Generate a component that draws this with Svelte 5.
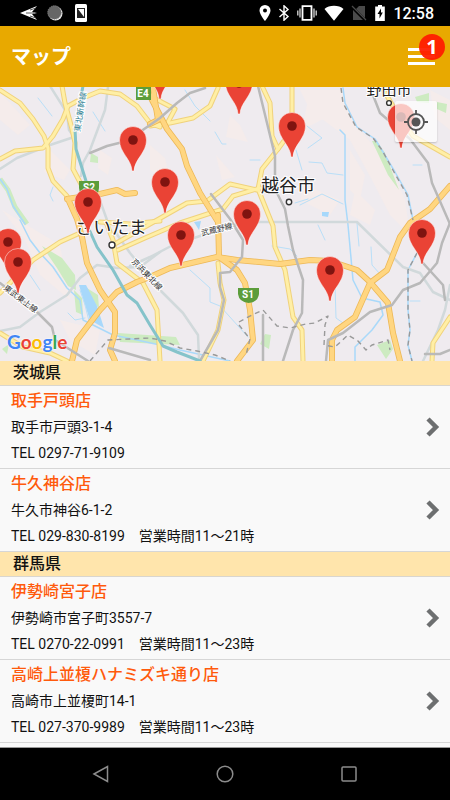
<script>
  const sections = [
    {
      prefecture: '茨城県',
      shops: [
        { name: '取手戸頭店', address: '取手市戸頭3-1-4', info: 'TEL 0297-71-9109' },
        { name: '牛久神谷店', address: '牛久市神谷6-1-2', info: 'TEL 029-830-8199　営業時間11〜21時' }
      ]
    },
    {
      prefecture: '群馬県',
      shops: [
        { name: '伊勢崎宮子店', address: '伊勢崎市宮子町3557-7', info: 'TEL 0270-22-0991　営業時間11〜23時' },
        { name: '高崎上並榎ハナミズキ通り店', address: '高崎市上並榎町14-1', info: 'TEL 027-370-9989　営業時間11〜23時' }
      ]
    }
  ];

  const pins = [
    [160, 68], [239, 83], [133, 140], [292, 126], [165, 182], [88, 202], [247, 214],
    [181, 235], [422, 233], [330, 270], [8, 242], [18, 262], [401, 117]
  ];

  const water = [
    'M0 179L7 189L13 206L25 224', 'M20 220L30 240L40 253L53 267L67 288L80 300L83 320L113 335L137 340L160 345L180 350L230 361',
    'M340 130L345 135L345 200L348 225L353 280L362 298L380 302L383 315L372 330L355 347L355 361',
    'M343 88L345 103L357 127L375 139L383 152L395 172L408 195L413 220', 'M417 253L408 270V310L410 330L408 345L412 361'
  ];

  const streams = [
    'M38 98L52 116', 'M93 112L105 131', 'M53 187L50 195L53 201', 'M185 90L195 106L210 121', 'M215 132L222 144L226 144',
    'M250 160H260', 'M296 150L302 170', 'M307 126L322 138L308 148', 'M309 162L322 163L327 173L343 175',
    'M300 205L322 194L343 204', 'M413 165H422', 'M190 270L210 288L210 302L220 306L248 337', 'M318 225L325 240', 'M357 223L359 246',
    'M371 247L372 265L380 274', 'M335 285L336 318L343 323', 'M410 301H420',
    'M272 246L290 249L297 256', 'M30 275L40 290', 'M68 313L75 320L85 318', 'M80 290L85 305L90 325', 'M295 203L308 199'
  ];

  const paleRails = [
    'M50 86L67 113L69 130L74 137L50 145L17 158L0 169', 'M108 87L105 110L90 150L83 163L81 176',
    'M160 252L140 267L117 268L97 265L80 278L67 295L40 312L20 327L0 331', 'M98 195L107 220',
    'M130 266L150 257L173 245L233 225L255 222L357 222L403 267L420 273L433 292L450 300',
    'M116 233L130 253L160 290L183 313L198 335L199 358', 'M450 285L445 310L438 330L423 361'
  ];

  const yellowRoads = [
    'M0 90L20 103L33 119L44 136L48 148L48 168L53 181L67 196',
    'M0 159L15 151L43 148L53 136L63 119L68 106L83 98L100 91L120 94L137 106L150 123L160 127',
    'M62 86L65 103L72 129L75 143L73 169L82 186', 'M218 88L210 106L193 118L170 123L150 126',
    'M150 96L175 109L168 122', 'M262 86L270 103L272 136L278 149L262 169L258 189L273 226L275 247L285 270L293 317L302 330L303 361',
    'M292 86V130L278 149', 'M113 245L150 224L187 203L207 201L230 184L257 190',
    'M118 250L145 238L180 223L223 209L233 196L260 188', 'M100 222L130 224L160 221', 'M106 222L113 240L117 263L143 283L157 310L160 361',
    'M0 293L33 260L60 242L80 233', 'M0 333L23 347L50 353L67 361',
    'M218 263L220 283L224 300L218 330L203 361', 'M380 84L397 113L413 136L450 157', 'M450 317L433 343L432 361'
  ];

  const orangeRoads = [
    'M67 199L100 194L117 190L125 194L135 193', 'M68 199L77 219L82 237L87 263L100 290L115 312L115 333L110 350L115 361',
    'M72 361L77 340L100 310L117 292L137 282L150 277L170 268L217 257L237 260L280 264L310 260L330 261L357 270L370 282L388 303L393 333L400 361',
    'M146 86L152 100L167 129L182 149L187 166L200 193L218 222', 'M218 215L219 257L237 270L245 283L250 310L253 340L237 361',
    'M332 361L332 340L337 330L355 317L370 283L387 270L400 237L410 223L430 209L450 186', 'M153 88L158 120L150 124'
  ];

  const rails = [
    'M90 153L107 146L127 141L160 118L177 103L190 93L205 88',
    'M258 86L267 123L275 156L275 189L285 209L288 226L293 250L303 280L302 313L293 330L283 361',
    'M211 194L230 219L243 240L242 257L230 272L220 273L220 287L224 300L218 330L200 361', 'M263 315V361',
    'M371 90L380 113L410 139L428 163L432 183L450 224', 'M450 223L442 243L437 263L420 283L403 290L392 305L370 312L343 333L328 340L326 361',
    'M423 263L443 285L445 300', 'M0 283L37 312L52 327L55 340L88 361', 'M109 348L150 360', 'M425 354L440 354L450 350'
  ];

  const borders = [
    'M341 88L343 103L356 127L373 138L382 150L394 172L407 195L413 220', 'M417 253L408 270V310L410 330L408 345L412 361',
    'M90 361L108 340L150 338L165 341L180 348L197 351L215 355L230 361', 'M239 322L252 315L263 310L277 326L290 328L306 324L315 323L328 316L325 325L324 345L335 347L348 335L358 341L366 350L372 345L388 340L390 350',
    'M239 325L250 339L246 355'
  ];
</script>

<div class="phone">
  <div class="status">
    <div class="group">
      <svg width="18" height="16" viewBox="0 0 18 16"><path d="M0 8L17 1L12 7L17 8L12 9L17 15Z" fill="#fff" /><path d="M6 8H14M10 5L16 3M10 11L16 13" stroke="#333" stroke-width=".8" /></svg>
      <svg width="16" height="16" viewBox="0 0 16 16"><circle cx="8.500" cy="8.500" r="7" fill="#eee" /><circle cx="7.500" cy="7.500" r="6.800" fill="#666" stroke="#888" stroke-dasharray="1 1" /></svg>
      <svg class="doc" width="12" height="18" viewBox="0 0 12 18"><rect width="12" height="18" rx="1.500" fill="#fff" /><path d="M2 4H10V14H2Z" fill="#222" /><path d="M3 5V13H9Z" fill="#222" /><path d="M3 5L9 13V5Z" fill="#fff" /></svg>
    </div>
    <div class="group right">
      <svg width="12" height="16" viewBox="0 0 12 16"><path d="M6 0A5.500 5.500 0 0 0 .5 5.500C.5 9.500 6 16 6 16S11.500 9.500 11.500 5.500A5.500 5.500 0 0 0 6 0Z" fill="#fff" /><circle cx="6" cy="5.500" r="2" /></svg>
      <svg width="12" height="16" viewBox="0 0 12 16"><path d="M1.500 4L10 11.500L6 15.200V.8L10 4.500L1.500 12" fill="none" stroke="#fff" stroke-width="1.400" /></svg>
      <svg width="20" height="16" viewBox="0 0 20 16"><path d="M5.500 1.200H14.500V14.800H5.500Z" fill="none" stroke="#fff" stroke-width="1.800" /><path d="M3 3.500V12.500M17 3.500V12.500M.8 5.500V10.500M19.200 5.500V10.500" stroke="#ddd" stroke-width="1.300" /></svg>
      <svg width="20" height="16" viewBox="0 0 20 16"><path d="M10 15.800L.5 4C5 -.2 15 -.2 19.500 4Z" fill="#fff" /></svg>
      <svg width="16" height="16" viewBox="0 0 16 16"><path d="M14 1V13L5 4L8 1ZM2 5L12 15H2Z" fill="#4a4a4a" /><path d="M1 1L15 15" stroke="#4a4a4a" stroke-width="1.300" /></svg>
      <svg width="12" height="16" viewBox="0 0 12 16"><path d="M4 0H8V1.500H10.800V16H1.200V1.500H4Z" fill="#fff" /><path d="M7 3.500L3.500 9H5.500V13.500L8.800 7.500H7Z" fill="#000" /></svg>
      <span class="clock">12:58</span>
    </div>
  </div>

  <header>
    <h1>マップ</h1>
    <button class="menu" aria-label="メニュー">
      <i></i><i></i><i></i>
      <span class="badge">1</span>
    </button>
  </header>

  <div class="map">
    <svg class="canvas" viewBox="0 87 450 274" preserveAspectRatio="xMidYMid slice" role="img" aria-label="店舗の地図">
      <rect x="-400" y="87" width="1300" height="274" fill="#efebef" />
      <g fill="#f5eceb">
        <path d="M0 92L30 125L18 135L0 120ZM50 150L70 170L64 180L44 172ZM100 150L112 158L108 175L98 168ZM150 145L165 158L170 180L150 170ZM230 115L240 125L248 142L226 137ZM216 155L235 177L222 180ZM2 210L60 245L70 300L40 275L25 240ZM60 320L100 330L95 355L70 340Z" />
        <path d="M300 90L340 90L360 130L390 165L405 200L410 235L390 215L372 180L350 140L310 110ZM305 185L340 200L330 215L300 200ZM350 150L365 175L360 200L350 190ZM430 90L450 100V130L435 118ZM310 90L330 100L325 118L302 130ZM355 190L375 210L370 225L350 215Z" />
      </g>
      <g fill="#cdebc1">
        <path d="M91 153L98 157L98 163L90 162ZM42 246L62 258L75 275L76 290L68 286L57 268ZM74 290L82 298L83 315L76 312ZM82 285L98 295L99 308L90 300Z" />
        <path d="M118 333L176 337L180 345L120 342ZM415 97L429 93V103L417 102ZM437 102L447 104L446 113L437 109ZM372 141L377 141L385 153L399 190L388 175ZM265 334L271 335L269 349L260 344ZM377 345L390 340L393 349L386 359ZM2 349L9 344L7 354Z" />
      </g>
      <path d="M79 285L86 285L97 306L104 328L90 320L84 302ZM322 212L329 212L328 217L322 216ZM194 222L201 221L199 230Z" fill="#a7d8fb" />
      <path d="M0 179L8 190L15 207L27 224" fill="none" stroke="#cdebc1" stroke-width="5" />
      <g class="lines">
        {#each streams as d}<path {d} stroke="#b9dff8" stroke-width="1" />{/each}
        {#each water as d}<path {d} stroke="#a9d9fa" stroke-width="1.500" />{/each}
        {#each paleRails as d}<path {d} stroke="#d1d9db" stroke-width="2.500" />{/each}
        {#each yellowRoads as d}<path {d} stroke="#f0d27c" stroke-width="5" />{/each}
        {#each yellowRoads as d}<path {d} stroke="#ffefa6" stroke-width="3" />{/each}
        {#each orangeRoads as d}<path {d} stroke="#edb857" stroke-width="6" />{/each}
        {#each orangeRoads as d}<path {d} stroke="#ffd681" stroke-width="4.400" />{/each}
        {#each rails as d}<path {d} stroke="#b9b9b9" stroke-width="2.500" />{/each}
        <path d="M83 86L75 129L76 149L86 181L88 227L97 247L113 270L127 295L137 303L150 325L163 346L177 352L200 361" stroke="#85c3ca" stroke-width="3" />
        {#each borders as d}<path {d} stroke="#999" stroke-width="1.400" stroke-dasharray="5 4" stroke-linecap="butt" />{/each}
      </g>
      <g class="shield">
        <path d="M136 87H151V100H136ZM79 181H99V188Q99 196 89 197Q79 196 79 188ZM238 288H259V294Q258 302 248.500 303Q239 302 238 294Z" fill="#5c9d3b" />
        <text x="143" y="97">E4</text>
        <text x="89" y="191">S2</text>
        <text x="248" y="298">S1</text>
      </g>
      <g class="city">
        <text x="111" y="234">さいたま</text>
        <text x="288" y="192">越谷市</text>
        <text class="small" x="389" y="95">野田市</text>
      </g>
      <g fill="#fff" stroke="#333" stroke-width="1.400">
        <circle cx="112" cy="245" r="3" /><circle cx="289" cy="202" r="2.700" /><circle cx="389" cy="103" r="2.400" />
      </g>
      <g class="rail">
        <text transform="translate(3 289) rotate(37)">東武東上線</text>
        <text transform="translate(131 262) rotate(46)">京浜東北線</text>
        <text transform="translate(202 236) rotate(-14)">武蔵野線</text>
        <text class="teal" transform="translate(80 132) rotate(-81)">東北新幹線</text>
      </g>
      {#each pins as [x, y]}
        <g transform="translate({x} {y})">
          <path d="M-1 31C-1.500 19 -13.500 13 -13.500 0A13.500 13.500 0 0 1 13.500 0C13.500 13 1.500 19 1 31Z" fill="#ea4335" stroke="#fff" stroke-opacity=".7" stroke-width=".7" />
          <circle r="4.800" fill="#7f1410" />
        </g>
      {/each}
    </svg>
    <div class="google"><span class="b">G</span><span class="r">o</span><span class="y">o</span><span class="b">g</span><span class="g">l</span><span class="r">e</span></div>
    <button class="locate" aria-label="現在地">
      <svg width="24" height="24" viewBox="0 0 24 24"><circle cx="12" cy="12" r="8" fill="none" stroke="#555" stroke-width="1.800" /><circle cx="12" cy="12" r="4.500" fill="#555" /><path d="M12 0V4M12 20V24M0 12H4M20 12H24" stroke="#555" stroke-width="1.800" /></svg>
    </button>
  </div>

  <main>
    {#each sections as section}
      <section>
        <h2>{section.prefecture}</h2>
        <ul>
          {#each section.shops as shop}
            <li>
              <a href="#shop">
                <div class="text">
                  <h3>{shop.name}</h3>
                  <p>{shop.address}</p>
                  <p>{shop.info}</p>
                </div>
                <svg width="14" height="20" viewBox="0 0 14 20"><path d="M2 2L10 10L2 18" fill="none" stroke="#6d6f70" stroke-width="4.500" /></svg>
              </a>
            </li>
          {/each}
        </ul>
      </section>
    {/each}
  </main>

  <nav>
    <button aria-label="戻る"><svg width="18" height="18" viewBox="0 0 18 18"><path d="M2 9L15.500 1.500V16.500Z" /></svg></button>
    <button aria-label="ホーム"><svg width="18" height="18" viewBox="0 0 18 18"><circle cx="9" cy="9" r="7.800" /></svg></button>
    <button aria-label="履歴"><svg width="18" height="18" viewBox="0 0 18 18"><rect x="2" y="2" width="14" height="14" rx="1" /></svg></button>
  </nav>
</div>

<style>
  .phone {
    display: flex;
    flex-direction: column;
    height: 100vh;
    background: #f9f9f9;
    color: #111;
    font-family: Roboto, "Noto Sans CJK JP", sans-serif;
  }
  h1, h2, h3, p, ul { margin: 0; padding: 0; }
  ul { list-style: none; }
  svg { display: block; flex: none; }
  button { border: 0; padding: 0; background: none; font: inherit; cursor: pointer; }
  .status {
    flex: none;
    display: flex;
    align-items: center;
    justify-content: space-between;
    height: 26px;
    padding: 0 16px 0 20px;
    background: #000;
    color: #fff;
  }
  .group { display: flex; align-items: center; gap: 9px; }
  .group.right { gap: 7px; }
  .doc { margin-left: 3px; }
  .clock { font-size: 16px; font-weight: 500; line-height: 24px; padding-top: 2px; }
  header {
    flex: none;
    display: flex;
    align-items: center;
    justify-content: space-between;
    height: 61px;
    padding: 0 15px 0 11px;
    background: #e8a900;
    color: #fff;
  }
  h1 { font-size: 20px; font-weight: 700; line-height: 30px; }
  .menu {
    position: relative;
    display: flex;
    flex-direction: column;
    gap: 4px;
    width: 27px;
  }
  .menu i { height: 3px; background: #fff; }
  .badge {
    position: absolute;
    right: -10px;
    top: -14px;
    width: 26px;
    height: 26px;
    border-radius: 50%;
    background: rgba(255, 28, 0, 0.94);
    color: #fff;
    font: 700 20px/26px "Noto Sans", sans-serif;
    text-align: center;
  }
  .map { position: relative; flex: none; height: 274px; overflow: hidden; }
  .canvas { width: 100%; height: 100%; }
  .lines { fill: none; stroke-linejoin: round; stroke-linecap: round; }
  .shield text { fill: #fff; font-size: 10px; font-weight: 700; text-anchor: middle; }
  .city text {
    fill: #222;
    font-size: 18px;
    text-anchor: middle;
    stroke: #fff;
    stroke-width: 2px;
    paint-order: stroke;
  }
  .city .small { font-size: 15px; }
  .rail text { fill: #333; font-size: 8px; stroke: #fff; stroke-width: 2px; paint-order: stroke; }
  .rail .teal { fill: #2f7f92; }
  .google {
    position: absolute;
    left: 7px;
    bottom: 6px;
    font: 700 19px/26px Lato, sans-serif;
    text-shadow: 0 0 1px #fff, 0 0 2px #fff;
  }
  .b { color: #4285f4; }
  .r { color: #ea4335; }
  .y { color: #fbbc05; }
  .g { color: #34a853; }
  .locate {
    position: absolute;
    top: 14px;
    right: 13px;
    display: grid;
    place-items: center;
    width: 42px;
    height: 41px;
    border-radius: 2px;
    background: rgba(255, 255, 255, 0.7);
    box-shadow: 0 1px 2px rgba(0, 0, 0, 0.2);
  }
  main { flex: 1; min-height: 0; overflow: hidden auto; }
  h2 {
    padding: 0 13px;
    border-bottom: 1px solid #d9d6cf;
    background: #ffe5ac;
    font-size: 16px;
    font-weight: 500;
    line-height: 24px;
  }
  a {
    display: flex;
    align-items: center;
    justify-content: space-between;
    padding: 2px 10px 2px 11px;
    border-bottom: 1px solid #d6d6d6;
    color: inherit;
    text-decoration: none;
  }
  h3 { color: #ff5a0c; font-size: 16px; font-weight: 500; line-height: 26px; }
  p { font-size: 14px; line-height: 26px; }
  nav {
    flex: none;
    display: flex;
    justify-content: center;
    gap: 106px;
    height: 52px;
    border-top: 1px solid #999;
    background: #000;
  }
  nav svg { fill: none; stroke: #8c8c8c; stroke-width: 1.5px; }
</style>
